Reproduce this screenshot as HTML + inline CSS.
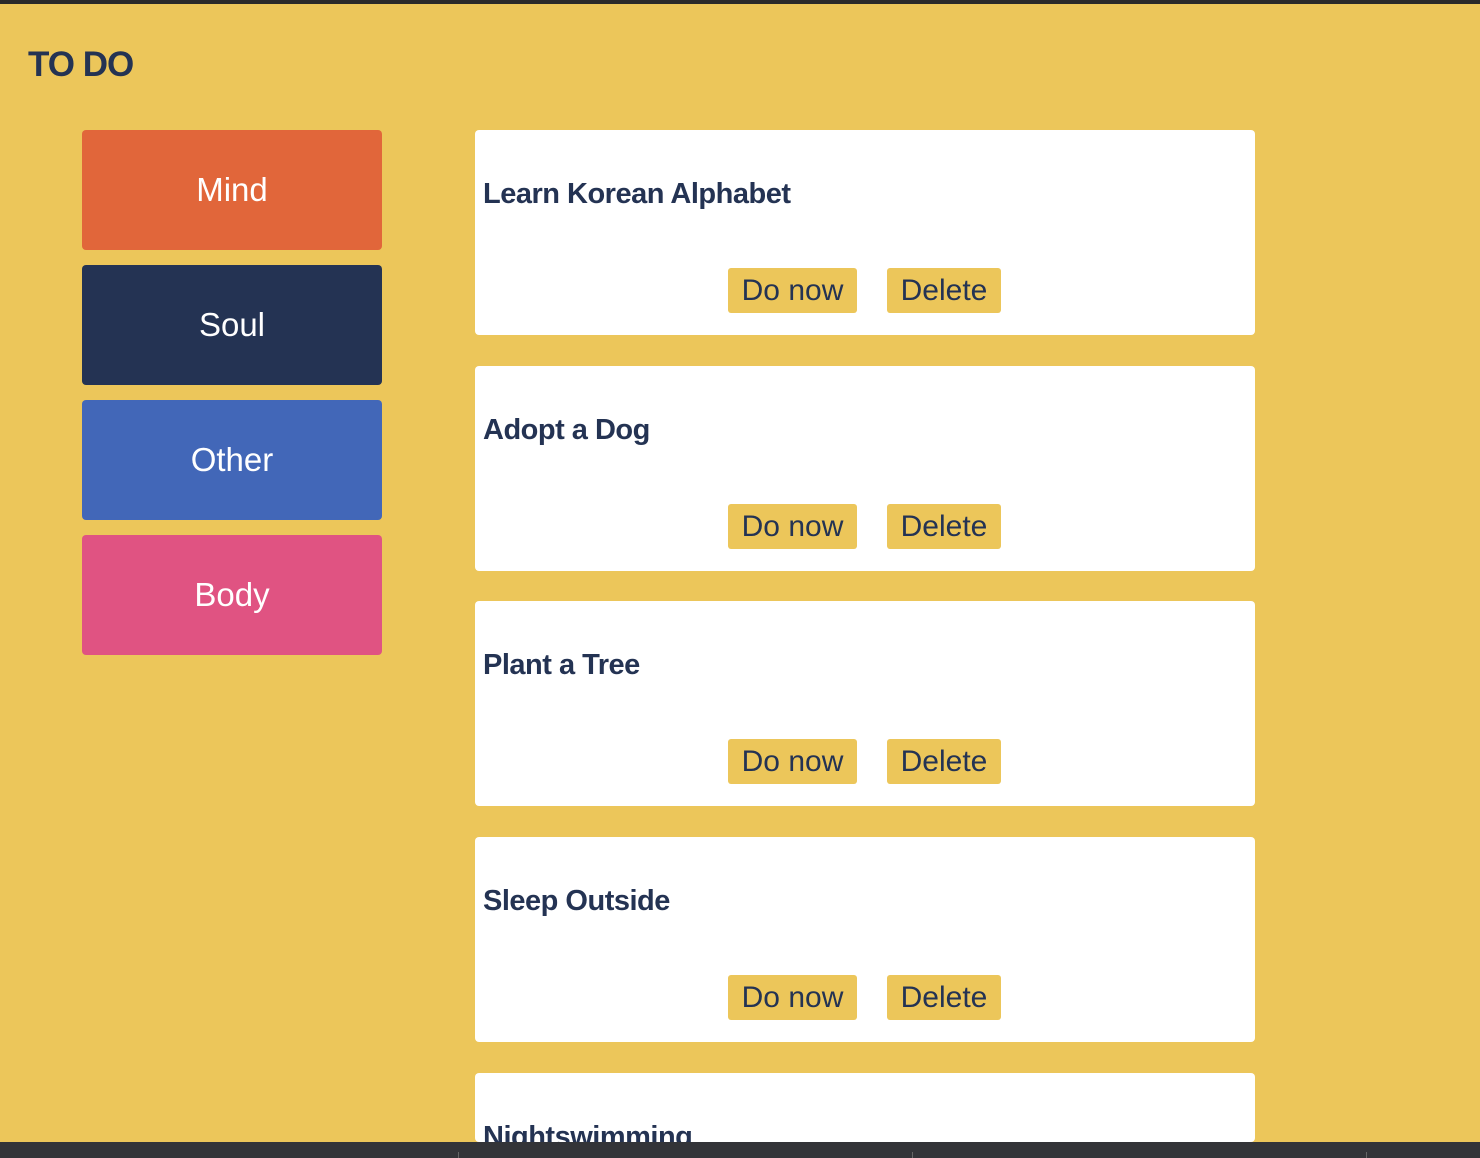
<!DOCTYPE html>
<html><head><style>
*{margin:0;padding:0;box-sizing:border-box}
html,body{width:1480px;height:1158px;overflow:hidden}
body{background:#ecc65a;position:relative;font-family:"Liberation Sans",sans-serif;color:#243353}
.top{position:absolute;left:0;top:0;width:1480px;height:4px;background:#2a2a2a}
h1{position:absolute;left:28px;top:45px;font-size:35px;font-weight:bold;letter-spacing:-1px}
.cat{position:absolute;left:82px;width:300px;height:120px;border-radius:4px;color:#fff;font-size:33px;text-align:center;line-height:120px}
.card{position:absolute;left:475px;width:780px;height:205px;background:#fff;border-radius:4px}
.card h2{position:absolute;left:8px;top:48px;font-size:29px;font-weight:bold;letter-spacing:-0.5px}
.b{position:absolute;top:138px;height:45px;background:#ecc65a;border-radius:3px;font-size:30px;line-height:45px;text-align:center}
.b1{left:253px;width:129px}.b2{left:412px;width:114px}
.bot{position:absolute;left:0;top:1142px;width:1480px;height:16px;background:#333438}
.tick{position:absolute;top:1152px;width:1px;height:6px;background:#666}
</style></head><body>
<div class="top"></div>
<h1>TO DO</h1>
<div class="cat" style="top:130px;background:#e1663a">Mind</div>
<div class="cat" style="top:265px;background:#243353">Soul</div>
<div class="cat" style="top:400px;background:#4267b8">Other</div>
<div class="cat" style="top:535px;background:#e05382">Body</div>
<div class="card" style="top:130px"><h2>Learn Korean Alphabet</h2><div class="b b1">Do now</div><div class="b b2">Delete</div></div>
<div class="card" style="top:366px"><h2>Adopt a Dog</h2><div class="b b1">Do now</div><div class="b b2">Delete</div></div>
<div class="card" style="top:601px"><h2>Plant a Tree</h2><div class="b b1">Do now</div><div class="b b2">Delete</div></div>
<div class="card" style="top:837px"><h2>Sleep Outside</h2><div class="b b1">Do now</div><div class="b b2">Delete</div></div>
<div class="card" style="top:1073px;height:69px;overflow:hidden"><h2>Nightswimming</h2></div>
<div class="bot"></div>
<div class="tick" style="left:458px"></div><div class="tick" style="left:912px"></div><div class="tick" style="left:1366px"></div>
</body></html>
